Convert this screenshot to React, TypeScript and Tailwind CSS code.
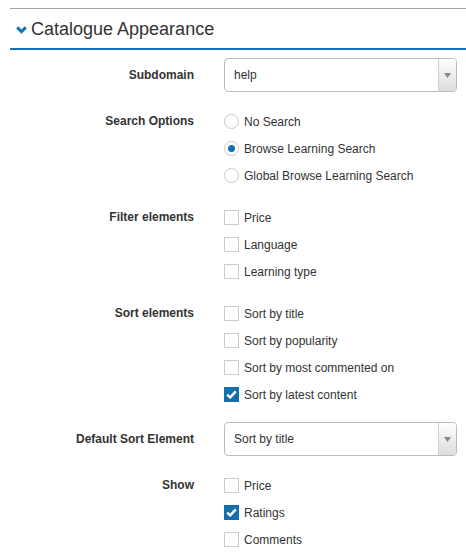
import React from 'react';

type Opt = { label: string; checked?: boolean };

const font = { fontFamily: '"Liberation Sans", Arial, sans-serif' };

function Checkbox({ label, checked }: Opt) {
  return (
    <div className="flex h-[27px] items-center">
      {checked ? (
        <span className="mr-[5px] flex h-[15px] w-[15px] items-center justify-center bg-[#156fab]">
          <svg width="11" height="9" viewBox="0 0 11 9">
            <path d="M1.2 4.6 L4.2 7.4 L9.8 1.4" fill="none" stroke="#fff" strokeWidth="2.4" />
          </svg>
        </span>
      ) : (
        <span className="mr-[5px] h-[15px] w-[15px] border border-[#cccccc] bg-white" />
      )}
      <span className="text-[12px] text-[#333]">{label}</span>
    </div>
  );
}

function Radio({ label, checked }: Opt) {
  return (
    <div className="flex h-[27px] items-center">
      <span className="mr-[5px] flex h-[15px] w-[15px] items-center justify-center rounded-full border border-[#c8c8c8] bg-white">
        {checked && <span className="h-[7px] w-[7px] rounded-full bg-[#0f70b4]" />}
      </span>
      <span className="text-[12px] text-[#333]">{label}</span>
    </div>
  );
}

function Select({ value }: { value: string }) {
  return (
    <div className="flex h-[34px] items-stretch overflow-hidden rounded-[4px] border border-[#bdbdbd] bg-white">
      <div className="flex flex-1 items-center pl-[9px] text-[12px] text-[#333]">{value}</div>
      <div className="flex w-[18px] items-center justify-center border-l border-[#d0d0d0] bg-gradient-to-b from-[#ffffff] to-[#dcdcdc]">
        <svg width="7" height="5" viewBox="0 0 7 5">
          <path d="M0 0 L7 0 L3.5 5 Z" fill="#888" />
        </svg>
      </div>
    </div>
  );
}

function Row({ label, children, center, gap = 'mb-[15px]' }: { label: string; children: React.ReactNode; center?: boolean; gap?: string }) {
  return (
    <div className={`${gap} flex ${center ? 'items-center' : 'items-start'}`}>
      <div className={`w-[184px] shrink-0 text-right text-[12px] font-bold text-[#333] ${center ? '' : 'leading-[27px]'}`}>
        {label}
      </div>
      <div className="ml-[30px] flex-1">{children}</div>
    </div>
  );
}

export default function App() {
  return (
    <div className="min-h-screen bg-white pt-2 pl-[10px]" style={font}>
      <div className="border-t border-[#a3a3a3]">
        <div className="flex h-[41px] items-center border-b-2 border-[#1672b6] pl-[6px] pt-[1px]">
          <svg width="11" height="8" viewBox="0 0 11 8" className="mr-[4px] mt-[2px]">
            <path d="M1.2 1.4 L5.5 5.6 L9.8 1.4" fill="none" stroke="#1672b6" strokeWidth="3" />
          </svg>
          <span className="text-[18px] text-[#333]">Catalogue Appearance</span>
        </div>
      </div>
      <div className="pt-2 pr-[9px]">
        <Row label="Subdomain" center gap="mb-[16px]">
          <Select value="help" />
        </Row>
        <Row label="Search Options">
          <Radio label="No Search" />
          <Radio label="Browse Learning Search" checked />
          <Radio label="Global Browse Learning Search" />
        </Row>
        <Row label="Filter elements">
          <Checkbox label="Price" />
          <Checkbox label="Language" />
          <Checkbox label="Learning type" />
        </Row>
        <Row label="Sort elements" gap="mb-[14px]">
          <Checkbox label="Sort by title" />
          <Checkbox label="Sort by popularity" />
          <Checkbox label="Sort by most commented on" />
          <Checkbox label="Sort by latest content" checked />
        </Row>
        <Row label="Default Sort Element" center gap="mb-[16px]">
          <Select value="Sort by title" />
        </Row>
        <Row label="Show">
          <Checkbox label="Price" />
          <Checkbox label="Ratings" checked />
          <Checkbox label="Comments" />
        </Row>
      </div>
    </div>
  );
}
